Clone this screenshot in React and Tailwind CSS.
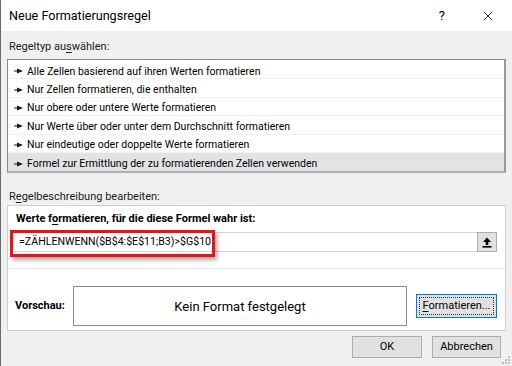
import { X } from "lucide-react";

const rules = [
  "Alle Zellen basierend auf ihren Werten formatieren",
  "Nur Zellen formatieren, die enthalten",
  "Nur obere oder untere Werte formatieren",
  "Nur Werte über oder unter dem Durchschnitt formatieren",
  "Nur eindeutige oder doppelte Werte formatieren",
  "Formel zur Ermittlung der zu formatierenden Zellen verwenden",
];

function Bullet() {
  return (
    <svg width="9" height="6" viewBox="0 0 9 6" className="mr-[4px] shrink-0">
      <path d="M0 2.5 L3 2.5 L3 0.5 L9 3 L3 5.5 L3 3.5 L0 3.5 Z" fill="#1a1a1a" />
    </svg>
  );
}

function UploadIcon() {
  return (
    <svg width="10" height="11" viewBox="0 0 10 11">
      <path d="M5 0.5 L9 5 L6.3 5 L6.3 8 L3.7 8 L3.7 5 L1 5 Z" fill="#000" />
      <rect x="0.5" y="9" width="9" height="1.6" fill="#000" />
    </svg>
  );
}

function Grip() {
  const dots = [[8, 2], [8, 5], [5, 5], [8, 8], [5, 8], [2, 8]];
  return (
    <svg width="11" height="11" viewBox="0 0 11 11" className="absolute right-[1px] bottom-[1px]">
      {dots.map(([x, y], i) => (
        <rect key={i} x={x} y={y} width="2" height="2" fill="#bdbdbd" />
      ))}
    </svg>
  );
}

export default function App() {
  return (
    <div
      className="relative w-[512px] h-[366px] bg-[#f0f0f0] flex flex-col overflow-hidden text-[11px] text-black border-l border-[#6b6b6b]"
      style={{ fontFamily: 'Roboto, "Noto Sans", sans-serif' }}
    >
      {/* Title bar */}
      <div className="h-[31px] bg-white flex items-center shrink-0">
        <span className="pl-[8px] text-[12.6px] leading-[16px]">Neue Formatierungsregel</span>
        <span className="ml-auto mr-[35px] text-[13px] leading-[16px]">?</span>
        <X size={16} strokeWidth={1.2} className="mr-[16px]" />
      </div>

      <div className="flex flex-col px-[6px]">
        {/* Rule type */}
        <div className="mt-[8px] pl-[2px] leading-[16px] text-[#1a1a1a]">
          Regeltyp au<span className="underline underline-offset-2">s</span>wählen:
        </div>
        <div className="mt-[4px] bg-white border border-[#8a8a8a] border-r-2 border-b-2 border-r-[#9a9a9a] border-b-[#b0b0b0] flex flex-col pt-[1px] text-[10.5px]">
          {rules.map((r, i) => (
            <div
              key={i}
              className={`h-[18.4px] flex items-center pl-[6px] pt-[3px] border-b border-[#f2f2f2] leading-[15px] ${
                i === rules.length - 1 ? "bg-[#e3e3e6] border-b-0" : ""
              }`}
            >
              <Bullet />
              <span>{r}</span>
            </div>
          ))}
        </div>

        {/* Rule description */}
        <div className="mt-[16px] pl-[2px] leading-[16px] text-[#1a1a1a]">
          R<span className="underline underline-offset-2">e</span>gelbeschreibung bearbeiten:
        </div>
        <div className="h-[126px] bg-white border border-[#cfcfcf] flex flex-col">
          <div className="relative px-[5px] pt-[5px]">
            <div className="pl-[3px] font-bold leading-[16px]">
              Werte f<span className="underline underline-offset-2">o</span>rmatieren, für die diese Formel wahr ist:
            </div>
            <div className="mt-[5px] h-[20px] mr-[3px] flex border border-[#d4d4d4]">
              <div className="flex-1 flex items-center pl-[5px] leading-[16px] text-[10.6px]">
                =ZÄHLENWENN($B$4:$E$11;B3)&gt;$G$10
              </div>
              <div className="w-[20px] h-[20px] -mt-[1px] -mr-[1px] bg-[#e1e1e1] border border-[#adadad] flex items-center justify-center">
                <UploadIcon />
              </div>
            </div>
            {/* annotation overlay */}
            <div className="absolute left-[2px] top-[24px] w-[205px] h-[27px] border-[3px] border-[#e8141b] shadow-[2px_3px_4px_rgba(0,0,0,0.35)]" />
          </div>
          <div className="mt-[16px] h-px bg-[#e6e6e6]" />
          <div className="flex items-center mt-[17px] pl-[7px]">
            <span className="font-bold w-[58px]">Vorschau:</span>
            <div className="w-[334px] h-[40px] border border-[#8a8a8a] flex items-center justify-center text-[13px]">
              Kein Format festgelegt
            </div>
            <div className="ml-[9px] w-[81px] h-[24px] bg-[#e1e1e1] border border-[#0078d7] p-[2px]">
              <div className="w-full h-full border border-dotted border-[#333] flex items-center justify-center leading-[14px]">
                <span className="underline underline-offset-2">F</span>ormatieren...
              </div>
            </div>
          </div>
        </div>

        {/* Buttons */}
        <div className="flex justify-end gap-[10px] mt-[5px] pr-[5px]">
          <div className="w-[70px] h-[22px] bg-[#e1e1e1] border border-[#adadad] flex items-center justify-center">OK</div>
          <div className="w-[69px] h-[22px] bg-[#e1e1e1] border border-[#adadad] flex items-center justify-center">Abbrechen</div>
        </div>
      </div>
      <Grip />
    </div>
  );
}
